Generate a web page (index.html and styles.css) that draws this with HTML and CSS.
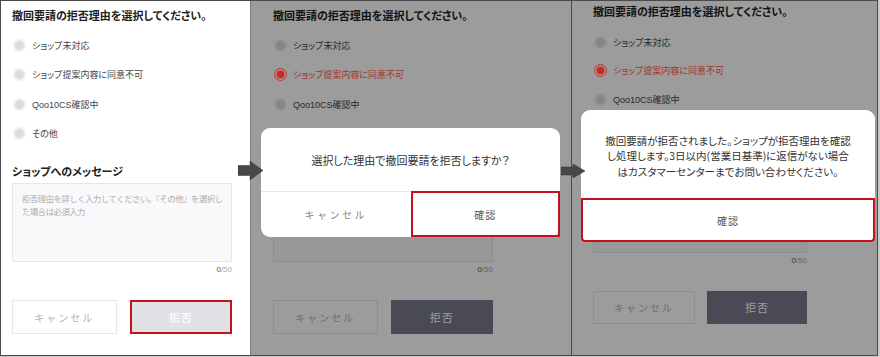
FILE: index.html
```html
<!DOCTYPE html>
<html lang="ja">
  <head>
    <meta charset="UTF-8" />
    <meta name="viewport" content="width=device-width, initial-scale=1.0" />
    <title>撤回要請の拒否</title>
    <link rel="stylesheet" href="styles.css">
  </head>
  <body>
    <div class="frame">
      <!-- step 1: form -->
      <section class="screen screen-form">
        <form class="reject-form">
          <h3 class="form-title">撤回要請の拒否理由を選択してください。</h3>
          <div class="options">
            <label class="option"><input type="radio" name="r1" />ショップ未対応</label>
            <label class="option"><input type="radio" name="r1" />ショップ提案内容に同意不可</label>
            <label class="option"><input type="radio" name="r1" />Qoo10CS確認中</label>
            <label class="option"><input type="radio" name="r1" />その他</label>
          </div>
          <h4 class="msg-title">ショップへのメッセージ</h4>
          <textarea class="msg-input" placeholder="拒否理由を詳しく入力してください。『その他』を選択し&#10;た場合は必須入力"></textarea>
          <div class="counter"><b>0</b>/50</div>
          <div class="actions">
            <button type="button" class="btn btn-cancel">キャンセル</button>
            <button type="button" class="btn btn-reject marked">拒否</button>
          </div>
        </form>
      </section>

      <!-- step 2: confirm -->
      <section class="screen screen-confirm">
        <form class="reject-form">
          <h3 class="form-title">撤回要請の拒否理由を選択してください。</h3>
          <div class="options">
            <label class="option"><input type="radio" name="r2" />ショップ未対応</label>
            <label class="option selected"><input type="radio" name="r2" checked />ショップ提案内容に同意不可</label>
            <label class="option"><input type="radio" name="r2" />Qoo10CS確認中</label>
            <label class="option"><input type="radio" name="r2" />その他</label>
          </div>
          <h4 class="msg-title">ショップへのメッセージ</h4>
          <textarea class="msg-input" placeholder="拒否理由を詳しく入力してください。『その他』を選択し&#10;た場合は必須入力"></textarea>
          <div class="counter"><b>0</b>/50</div>
          <div class="actions">
            <button type="button" class="btn btn-cancel">キャンセル</button>
            <button type="button" class="btn btn-reject active">拒否</button>
          </div>
        </form>
        <div class="backdrop"></div>
        <div class="dialog dialog-confirm">
          <p class="dialog-body">選択した理由で撤回要請を拒否しますか？</p>
          <div class="dialog-foot">
            <button type="button" class="dialog-btn">キャンセル</button>
            <button type="button" class="dialog-btn marked">確認</button>
          </div>
        </div>
      </section>

      <!-- step 3: done -->
      <section class="screen screen-done">
        <form class="reject-form">
          <h3 class="form-title">撤回要請の拒否理由を選択してください。</h3>
          <div class="options">
            <label class="option"><input type="radio" name="r3" />ショップ未対応</label>
            <label class="option selected"><input type="radio" name="r3" checked />ショップ提案内容に同意不可</label>
            <label class="option"><input type="radio" name="r3" />Qoo10CS確認中</label>
            <label class="option"><input type="radio" name="r3" />その他</label>
          </div>
          <h4 class="msg-title">ショップへのメッセージ</h4>
          <textarea class="msg-input" placeholder="拒否理由を詳しく入力してください。『その他』を選択し&#10;た場合は必須入力"></textarea>
          <div class="counter"><b>0</b>/50</div>
          <div class="actions">
            <button type="button" class="btn btn-cancel">キャンセル</button>
            <button type="button" class="btn btn-reject active">拒否</button>
          </div>
        </form>
        <div class="backdrop"></div>
        <div class="dialog dialog-done">
          <p class="dialog-body">
            <span>撤回要請が拒否されました。ショップが拒否理由を確認</span>
            <span>し処理します。3日以内(営業日基準)に返信がない場合</span>
            <span>はカスタマーセンターまでお問い合わせください。</span>
          </p>
          <div class="dialog-foot">
            <button type="button" class="dialog-btn marked">確認</button>
          </div>
        </div>
      </section>

      <svg class="arrow arrow-1" width="25" height="19" viewBox="0 0 25 19">
        <polygon points="0,4.5 12,4.5 12,0 25,9.5 12,19 12,14.5 0,14.5" />
      </svg>
      <svg class="arrow arrow-2" width="24" height="14" viewBox="0 0 24 14">
        <polygon points="0,3 12,3 12,0 24,7 12,14 12,11 0,11" />
      </svg>
    </div>
  </body>
</html>
```

FILE: styles.css
```css
body {
  margin: 0;
  background-color: #c9c9c9;
  font-family: "Liberation Sans", "Noto Sans CJK JP", sans-serif;
  font-feature-settings: "palt";
  color: #333;
}

.frame {
  position: relative;
  display: flex;
  width: 878px;
  height: 356px;
  box-sizing: border-box;
  border: 1px solid #4a4a4a;
  background-color: #fff;
}

.screen {
  position: relative;
  height: 354px;
  overflow: hidden;
  box-sizing: border-box;
  background-color: #fff;

  --pad-top: 7px;
  --pad-left: 11px;
  --form-w: 220px;
  --title-gap: 11px;
  --row-gap: 9.5px;
  --label-gap: 20.5px;
  --ta-h: 79px;
  --btn-h: 34px;
  --btn-gap: 13px;
}

.screen-form {
  width: 249px;
}

.screen-confirm {
  width: 322px;
  border-left: 1px solid #7d7d7d;
  border-right: 1px solid #4a4a4a;
  --pad-left: 22px;
}

.screen-done {
  width: 305px;
  --pad-top: 3px;
  --pad-left: 21px;
  --form-w: 214px;
  --title-gap: 12px;
  --row-gap: 8.5px;
  --label-gap: 20px;
  --ta-h: 76px;
  --btn-h: 33px;
  --btn-gap: 12px;
}

/* the form */
.reject-form {
  width: var(--form-w);
  margin: 0;
  padding: var(--pad-top) 0 0 var(--pad-left);
}

.form-title {
  margin: 0 0 var(--title-gap);
  font-size: 11px;
  line-height: 16px;
  font-weight: bold;
  color: #222;
  white-space: nowrap;
}

.options {
  display: flex;
  flex-direction: column;
  gap: var(--row-gap);
}

.option {
  display: flex;
  align-items: center;
  gap: 6px;
  height: 20px;
  font-size: 9px;
  color: #444;
  white-space: nowrap;
}

.option input {
  appearance: none;
  width: 13px;
  height: 13px;
  margin: 0 0 0 1px;
  border-radius: 50%;
  border: 2px solid #f1f1f1;
  background-color: #dcdcdc;
  box-sizing: border-box;
}

.option.selected {
  position: relative;
  z-index: 2;
  color: #a3342e;
}

.option.selected input {
  border: 1.5px solid #c4463d;
  background-color: #cc2b22;
  box-shadow: inset 0 0 0 1.5px #9c9c9c;
}

.msg-title {
  margin: var(--label-gap) 0 3px;
  font-size: 11px;
  line-height: 16px;
  font-weight: bold;
  color: #222;
}

.msg-input {
  display: block;
  width: 100%;
  height: var(--ta-h);
  margin: 0;
  padding: 9px 0 0 9px;
  box-sizing: border-box;
  border: 1px solid #e6e6e6;
  background-color: #f9f9fb;
  font-family: inherit;
  font-size: 8.3px;
  line-height: 13px;
  letter-spacing: -0.4px;
  white-space: pre;
  overflow: hidden;
  resize: none;
}

.msg-input::placeholder {
  color: #adadad;
}

.counter {
  margin-top: 3px;
  font-size: 8px;
  line-height: 10px;
  text-align: right;
  color: #aaa;
}

.counter b {
  font-weight: normal;
  color: #555;
}

.actions {
  display: flex;
  gap: var(--btn-gap);
  margin-top: 25px;
}

.btn {
  flex: 1;
  height: var(--btn-h);
  padding: 0;
  border: 1px solid #e6e6e6;
  background-color: #fff;
  font-family: inherit;
  font-size: 10px;
  letter-spacing: 2px;
  color: #b3b3b3;
}

.btn-reject {
  border: none;
  background-color: #e2e2e6;
  color: #fff;
  font-size: 11px;
  letter-spacing: 1px;
}

.btn-reject.active {
  background-color: #79798b;
}

.marked {
  outline: 2px solid #c4121c;
  outline-offset: -2px;
}

/* modal */
.backdrop {
  position: absolute;
  inset: 0;
  z-index: 1;
  background-color: rgba(0, 0, 0, 0.39);
}

.dialog {
  position: absolute;
  z-index: 3;
  display: flex;
  flex-direction: column;
  background-color: #fff;
  border-radius: 9px;
}

.dialog-confirm {
  left: 10px;
  top: 127px;
  width: 299px;
  height: 109px;
}

.dialog-done {
  left: 9px;
  top: 109px;
  width: 294px;
  height: 132px;
}

.dialog-body {
  flex: 1;
  display: flex;
  flex-direction: column;
  align-items: center;
  justify-content: center;
  margin: 0;
  text-align: center;
  font-size: 11px;
  line-height: 16px;
  color: #333;
}

.dialog-confirm .dialog-body {
  padding-top: 2px;
}

.dialog-done .dialog-body {
  font-family: "Noto Sans CJK JP", sans-serif;
  font-size: 10.5px;
  padding-top: 4px;
}

.dialog-done .dialog-body span {
  display: block;
  height: 15.5px;
  line-height: 15.5px;
  white-space: nowrap;
}

.dialog-foot {
  display: flex;
  height: 46px;
  border-top: 1px solid #e6e6e6;
  box-sizing: border-box;
}

.dialog-done .dialog-foot {
  height: 44px;
}

.dialog-btn {
  flex: 1;
  padding: 0;
  border: none;
  background: transparent;
  font-family: inherit;
  font-size: 10px;
  letter-spacing: 2.5px;
  color: #888;
}

.dialog-btn.marked {
  height: calc(100% + 1px);
  margin-top: -1px;
  color: #555;
  letter-spacing: 1px;
}

.dialog-done .dialog-btn.marked {
  border-radius: 0 0 4px 4px;
}

/* step arrows */
.arrow {
  position: absolute;
  z-index: 4;
  fill: #484848;
  stroke: #333;
  stroke-width: 0.5;
}

.arrow-1 {
  left: 237px;
  top: 160px;
}

.arrow-2 {
  left: 560px;
  top: 163px;
}
```
